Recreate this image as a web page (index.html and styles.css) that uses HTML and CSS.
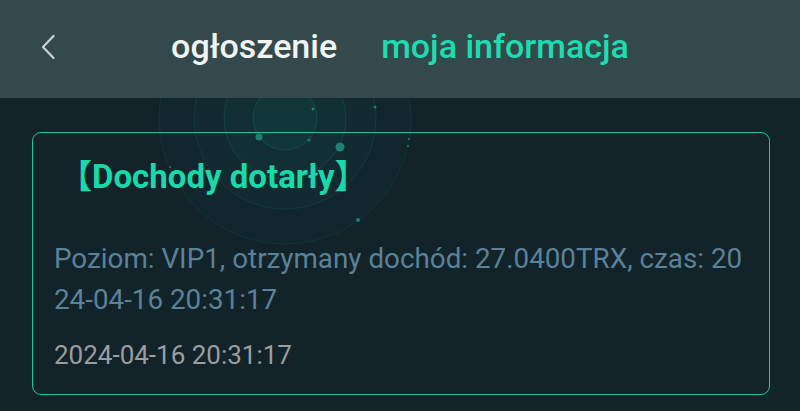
FILE: index.html
```html
<!DOCTYPE html>
<html lang="pl">
<head>
  <meta charset="UTF-8">
  <meta name="viewport" content="width=device-width, initial-scale=1.0">
  <title>ogłoszenie</title>
  <link rel="stylesheet" href="styles.css">
</head>
<body>
  <header class="top-bar">
    <button class="back-btn" aria-label="back">
      <svg width="16" height="26" viewBox="0 0 16 26">
        <path d="M13.5 2 L3 13 L13.5 24" fill="none" stroke="#c9d1d2" stroke-width="2.2" stroke-linecap="round" stroke-linejoin="round"/>
      </svg>
    </button>
    <nav class="tabs">
      <span class="tab tab-active">ogłoszenie</span>
      <span class="tab tab-other">moja informacja</span>
    </nav>
    <div class="spacer"></div>
  </header>

  <main class="content">
    <!-- radar decoration behind the card -->
    <svg class="radar" width="300" height="300" viewBox="0 0 300 300">
      <circle cx="150" cy="150" r="126" fill="rgba(30,190,160,0.025)" stroke="rgba(40,200,170,0.10)" stroke-width="1"/>
      <circle cx="150" cy="150" r="91" fill="rgba(30,190,160,0.03)" stroke="rgba(40,200,170,0.12)" stroke-width="1"/>
      <circle cx="150" cy="150" r="61" fill="rgba(30,190,160,0.04)" stroke="rgba(40,200,170,0.14)" stroke-width="1"/>
      <circle cx="150" cy="150" r="32" fill="rgba(30,190,160,0.06)" stroke="rgba(40,200,170,0.16)" stroke-width="1"/>
      <circle cx="124" cy="169" r="3.5" fill="#1f7f73"/>
      <circle cx="205" cy="179" r="4.5" fill="#1f7f73"/>
      <circle cx="174" cy="172" r="1.5" fill="#1f7f73"/>
      <circle cx="178" cy="141" r="1.5" fill="#1f7f73"/>
      <circle cx="240" cy="139" r="1.5" fill="#1f7f73"/>
      <circle cx="274" cy="171" r="1" fill="#1f7f73"/>
      <circle cx="273" cy="178" r="1" fill="#1f7f73"/>
      <circle cx="223" cy="252" r="2" fill="#1f7f73"/>
      <circle cx="35" cy="199" r="1" fill="#1f7f73"/>
      <circle cx="116" cy="209" r="1" fill="#1f7f73"/>
    </svg>

    <section class="notice-card">
      <h2 class="notice-title">【Dochody dotarły】</h2>
      <p class="notice-text">Poziom: VIP1, otrzymany dochód: 27.0400TRX, czas: 2024-04-16 20:31:17</p>
      <p class="notice-date">2024-04-16 20:31:17</p>
    </section>
  </main>
</body>
</html>
```

FILE: styles.css
```css
body {
  margin: 0;
  height: 100vh;
  background-color: #12232a;
  font-family: Roboto, "Noto Sans CJK SC", sans-serif;
  overflow: hidden;
}

.top-bar {
  position: relative;
  z-index: 2;
  height: 98px;
  display: grid;
  grid-template-columns: 1fr auto 1fr;
  align-items: center;
  background-color: #33494b;
}

.back-btn {
  justify-self: start;
  margin-left: 40px;
  margin-top: -4px;
  padding: 0;
  border: none;
  background: none;
  display: flex;
  cursor: pointer;
}

.tabs {
  display: flex;
  gap: 44px;
  padding-bottom: 6px;
}

.tab {
  font-size: 34px;
  font-weight: 500;
  line-height: 40px;
}

.tab-active {
  color: #f2f4f4;
}

.tab-other {
  color: #1edcb1;
}

.content {
  position: relative;
  padding: 34px 30px 0 32px;
}

.radar {
  position: absolute;
  left: 135px;
  top: -130px;
  z-index: 0;
}

.notice-card {
  position: relative;
  z-index: 1;
  border: 1.5px solid #1fc49c;
  border-radius: 9px;
  padding: 24px 22px 19px 21px;
}

.notice-title {
  margin: 0 0 41px 5px;
  font-size: 33px;
  font-weight: 700;
  line-height: 40px;
  color: #19d9aa;
}

.notice-text {
  margin: 0;
  font-size: 27.8px;
  line-height: 41px;
  color: #5a8299;
  word-break: break-all;
}

.notice-date {
  margin: 15px 0 0 0;
  font-size: 26px;
  line-height: 40px;
  color: #9d9d9d;
}
```
